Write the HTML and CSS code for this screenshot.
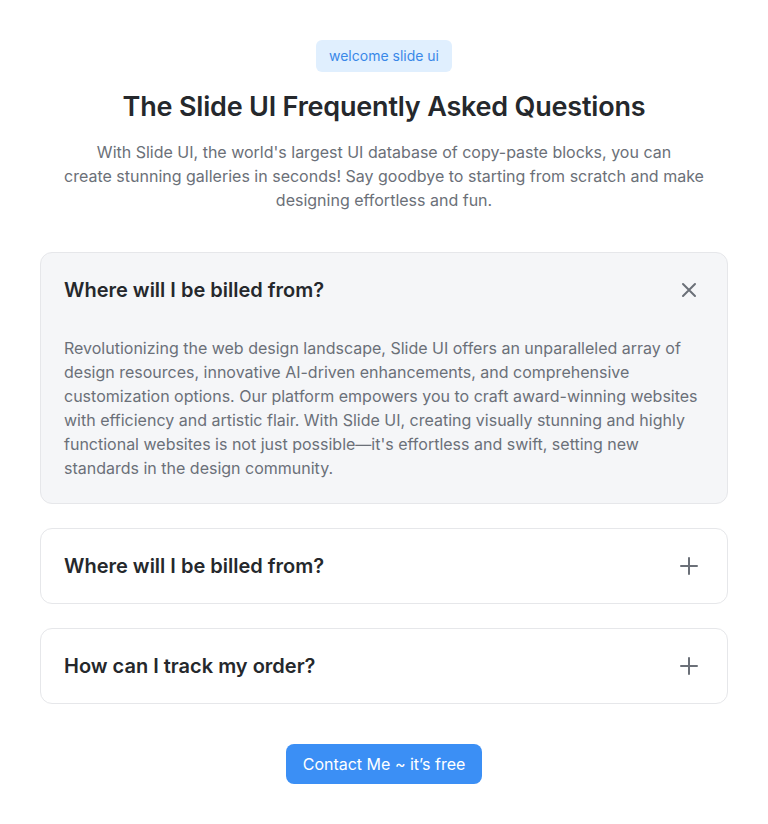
FILE: index.html
```html
<!DOCTYPE html>
<html lang="en">
<head>
<meta charset="utf-8">
<title>FAQ</title>
<link rel="stylesheet" href="styles.css">
</head>
<body>
<section class="faq">
  <header class="faq-head">
    <span class="badge">welcome slide ui</span>
    <h1 class="title">The Slide UI Frequently Asked Questions</h1>
    <p class="lead">With Slide UI, the world's largest UI database of copy-paste blocks, you can<br>create stunning galleries in seconds! Say goodbye to starting from scratch and make designing effortless and fun.</p>
  </header>
  <div class="items">
    <div class="item open">
      <div class="q">
        <span>Where will I be billed from?</span>
        <svg class="icon" width="24" height="24" viewBox="0 0 24 24" fill="none" stroke="currentColor" stroke-width="2" stroke-linecap="round"><path d="M6 6l12 12M18 6L6 18"/></svg>
      </div>
      <p class="a">Revolutionizing the web design landscape, Slide UI offers an unparalleled array of design resources, innovative AI-driven enhancements, and comprehensive customization options. Our platform empowers you to craft award-winning websites with efficiency and artistic flair. With Slide UI, creating visually stunning and highly functional websites is not just possible—it's effortless and swift, setting new standards in the design community.</p>
    </div>
    <div class="item">
      <div class="q">
        <span>Where will I be billed from?</span>
        <svg class="icon" width="24" height="24" viewBox="0 0 24 24" fill="none" stroke="currentColor" stroke-width="2" stroke-linecap="round"><path d="M12 4v16M4 12h16"/></svg>
      </div>
    </div>
    <div class="item">
      <div class="q">
        <span>How can I track my order?</span>
        <svg class="icon" width="24" height="24" viewBox="0 0 24 24" fill="none" stroke="currentColor" stroke-width="2" stroke-linecap="round"><path d="M12 4v16M4 12h16"/></svg>
      </div>
    </div>
  </div>
  <div class="cta-wrap"><a class="cta" href="#">Contact Me ~ it’s free</a></div>
</section>
</body>
</html>
```
FILE: styles.css
```css
* { box-sizing: border-box; }
body {
  margin: 0;
  font-family: Inter, "Noto Sans", sans-serif;
  background: #fff;
  color: #1f2328;
}
.faq {
  width: 688px;
  margin: 0 auto;
  padding: 40px 0;
}
.faq-head {
  display: flex;
  flex-direction: column;
  align-items: center;
  text-align: center;
}
.badge {
  display: inline-block;
  background: #e0effe;
  color: #3a88e8;
  font-size: 14px;
  line-height: 20px;
  padding: 6px 13px;
  border-radius: 6px;
}
.title {
  margin: 17px 0 0;
  font-size: 27px;
  line-height: 36px;
  font-weight: 600;
  color: #25282c;
  letter-spacing: -0.2px;
}
.lead {
  margin: 15px 0 0;
  max-width: 660px;
  font-size: 16px;
  line-height: 24px;
  color: #6b7078;
}
.items {
  margin-top: 40px;
  display: flex;
  flex-direction: column;
  gap: 24px;
}
.item {
  border: 1px solid #e6e7ea;
  border-radius: 12px;
  background: #fff;
}
.item.open { background: #f5f6f8; }
.q {
  display: flex;
  justify-content: space-between;
  align-items: center;
  padding: 23px 23px;
  font-size: 20px;
  line-height: 28px;
  font-weight: 600;
  color: #25282c;
}
.icon { color: #6b7078; margin-right: 3px; }
.a {
  margin: 0;
  padding: 9px 23px 23px;
  font-size: 16px;
  line-height: 24px;
  color: #6b7078;
}
.cta-wrap {
  display: flex;
  justify-content: center;
  margin-top: 40px;
}
.cta {
  display: inline-block;
  background: #3b8ff5;
  color: #fff;
  text-decoration: none;
  font-size: 16px;
  line-height: 24px;
  padding: 8px 17px;
  border-radius: 8px;
}
```
